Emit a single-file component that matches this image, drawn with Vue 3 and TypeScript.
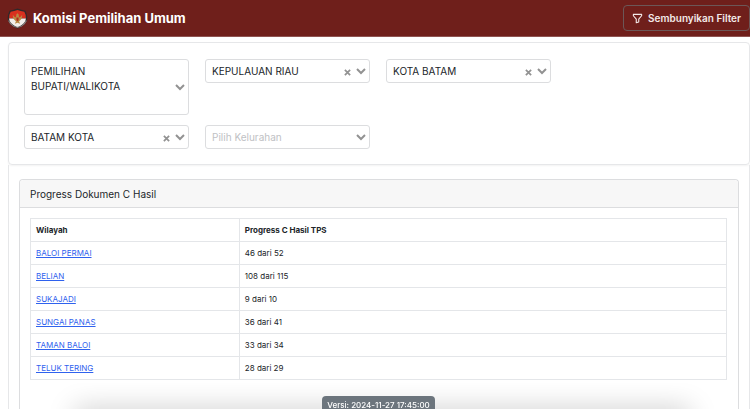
<script setup lang="ts">
import { reactive, ref } from 'vue'

interface Filter {
  id: string
  label: string
  value: string
  options: string[]
  clearable?: boolean
  multiline?: boolean
  startsRow?: boolean
}

interface Row {
  wilayah: string
  selesai: number
  total: number
}

const showFilter = ref(true)

const filters = reactive<Filter[]>([
  { id: 'jenis', label: 'Pilih Pemilihan', value: 'PEMILIHAN BUPATI/WALIKOTA', options: ['PEMILIHAN BUPATI/WALIKOTA'], multiline: true },
  { id: 'provinsi', label: 'Pilih Provinsi', value: 'KEPULAUAN RIAU', options: ['KEPULAUAN RIAU'], clearable: true },
  { id: 'kabupaten', label: 'Pilih Kabupaten/Kota', value: 'KOTA BATAM', options: ['KOTA BATAM'], clearable: true },
  { id: 'kecamatan', label: 'Pilih Kecamatan', value: 'BATAM KOTA', options: ['BATAM KOTA'], clearable: true, startsRow: true },
  {
    id: 'kelurahan',
    label: 'Pilih Kelurahan',
    value: '',
    options: ['BALOI PERMAI', 'BELIAN', 'SUKAJADI', 'SUNGAI PANAS', 'TAMAN BALOI', 'TELUK TERING'],
    clearable: true,
  },
])

const rows: Row[] = [
  { wilayah: 'BALOI PERMAI', selesai: 46, total: 52 },
  { wilayah: 'BELIAN', selesai: 108, total: 115 },
  { wilayah: 'SUKAJADI', selesai: 9, total: 10 },
  { wilayah: 'SUNGAI PANAS', selesai: 36, total: 41 },
  { wilayah: 'TAMAN BALOI', selesai: 33, total: 34 },
  { wilayah: 'TELUK TERING', selesai: 28, total: 29 },
]
</script>

<template>
  <div class="page">
    <header class="navbar">
      <a class="brand" href="#">
        <svg class="logo" viewBox="0 0 40 40" aria-hidden="true">
          <path d="M5 5Q13 4 20 1Q27 4 35 5Q40 14 38 24Q34 35 20 39Q6 35 2 24Q0 14 5 5Z" fill="#30292a" />
          <path d="M7 7Q14 6 20 4Q26 6 33 7Q37 14 36 20H4Q3 14 7 7Z" fill="#d9301f" />
          <path d="M4 20H36Q36 30 20 37Q4 30 4 20Z" fill="#f1eeea" />
          <path d="M11 13Q11 22 17 25L15 30L20 28L25 30L23 25Q29 22 29 13Q26 18 23 18L22 12L20 10L18 12L17 18Q14 18 11 13Z" fill="#b98a45" />
          <path d="M18 18H22V22Q22 24 20 25Q18 24 18 22Z" fill="#b52a1e" />
          <path d="M3 24Q6 31 12 34M37 24Q34 31 28 34M12 35Q20 38 28 35" fill="none" stroke="#8d8583" stroke-width="2" />
        </svg>
        <span>Komisi Pemilihan Umum</span>
      </a>
      <button class="toggle" type="button" @click="showFilter = !showFilter">
        <svg class="funnel" viewBox="0 0 16 16" aria-hidden="true">
          <path d="M2 2H14V4L9.8 8.8V13L6.2 14.2V8.8L2 4Z" fill="none" stroke="currentColor" stroke-width="1.6" stroke-linejoin="round" />
        </svg>
        <span>{{ showFilter ? 'Sembunyikan' : 'Tampilkan' }} Filter</span>
      </button>
    </header>

    <main class="content">
      <form v-if="showFilter" class="filters" @submit.prevent>
        <div v-for="f in filters" :key="f.id" class="field" :class="{ multiline: f.multiline, 'starts-row': f.startsRow }">
          <select :id="f.id" v-model="f.value" :aria-label="f.label" :class="{ empty: !f.value }">
            <option value="" disabled>{{ f.label }}</option>
            <option v-for="o in f.options" :key="o" :value="o">{{ o }}</option>
          </select>
          <label v-if="f.multiline" class="wrapped" :for="f.id">{{ f.value }}</label>
          <span class="marks">
            <button v-if="f.clearable && f.value" class="clear" type="button" aria-label="Hapus" @click="f.value = ''">
              <svg viewBox="0 0 8 8" aria-hidden="true"><path d="M1 1L7 7M7 1L1 7" /></svg>
            </button>
            <svg class="chevron" viewBox="0 0 10 7" aria-hidden="true"><path d="M1 1L5 5L9 1" /></svg>
          </span>
        </div>
      </form>

      <section class="results">
        <div class="card">
          <h2 class="card-title">Progress Dokumen C Hasil</h2>
          <div class="card-body">
            <table>
              <thead>
                <tr>
                  <th scope="col" class="area">Wilayah</th>
                  <th scope="col">Progress C Hasil TPS</th>
                </tr>
              </thead>
              <tbody>
                <tr v-for="r in rows" :key="r.wilayah">
                  <td><a href="#">{{ r.wilayah }}</a></td>
                  <td>{{ r.selesai }} dari {{ r.total }}</td>
                </tr>
              </tbody>
            </table>
          </div>
        </div>
      </section>
    </main>

    <footer class="version">
      <span class="badge">Versi: 2024-11-27 17:45:00</span>
    </footer>
  </div>
</template>

<style>
html,
body {
  background: #fff;
  overflow-x: hidden;
}
body {
  margin: 0;
}
</style>

<style scoped>
.page {
  min-height: 100vh;
  display: flex;
  flex-direction: column;
  color: #212529;
  font-family: Inter, 'Liberation Sans', sans-serif;
  font-size: 10px;
}
.page * {
  box-sizing: border-box;
}
.navbar {
  flex: none;
  height: 37px;
  display: flex;
  align-items: center;
  justify-content: space-between;
  padding-left: 7px;
  background: #6f1f1b;
  border-bottom: 1px solid #8f5452;
}
.brand {
  display: flex;
  align-items: center;
  gap: 5px;
  color: #fff;
  font-size: 13px;
  font-weight: 700;
  line-height: 20px;
  text-decoration: none;
}
.logo {
  width: 21px;
  height: 21px;
}
.toggle {
  display: flex;
  align-items: center;
  gap: 5px;
  height: 26px;
  padding: 0 8px;
  background: transparent;
  border: 1px solid #6c5757;
  border-radius: 4px;
  color: #f3e9e8;
  font: 600 10px/16px Inter, 'Liberation Sans', sans-serif;
}
.funnel {
  width: 11px;
  height: 11px;
}
.content {
  flex: 1;
  display: flex;
  flex-direction: column;
  padding: 5px 0 0 8px;
}
.filters {
  display: grid;
  grid-template-columns: repeat(4, 1fr);
  align-items: start;
  gap: 10px 16px;
  padding: 16px 17px 15px 15px;
  border: 1px solid #e6e7e9;
  border-radius: 4px;
  box-shadow: 0 1px 2px #0000000d;
}
.field {
  display: grid;
  align-items: center;
}
.starts-row {
  grid-column-start: 1;
}
.field > * {
  grid-area: 1 / 1;
}
select {
  appearance: none;
  width: 100%;
  height: 24px;
  margin: 0;
  padding: 0 34px 0 6px;
  background: #fff;
  border: 1px solid #dcdddf;
  border-radius: 3px;
  color: #212529;
  font: 400 10px/15px Inter, 'Liberation Sans', sans-serif;
}
select.empty {
  color: #c0c1c4;
  opacity: 1;
}
.multiline select {
  height: 56px;
  color: transparent;
}
.wrapped {
  align-self: start;
  padding: 5px 34px 0 7px;
  line-height: 15px;
  pointer-events: none;
}
.marks {
  justify-self: end;
  display: flex;
  align-items: center;
  gap: 5px;
  padding-right: 4px;
  pointer-events: none;
}
.marks path {
  fill: none;
  stroke: #929292;
  stroke-width: 2;
}
.clear {
  display: flex;
  padding: 2px 0 0;
  background: none;
  border: 0;
  pointer-events: auto;
}
.clear svg {
  width: 7px;
  height: 7px;
}
.chevron {
  width: 10px;
  height: 7px;
}
.results {
  flex: 1;
  display: flex;
  padding: 14px 10px 0;
  border: solid #e6e7e9;
  border-width: 0 1px;
}
.card {
  flex: 1;
  border: 1px solid #dcdddf;
  border-bottom: 0;
  border-radius: 4px 4px 0 0;
}
.card-title {
  margin: 0;
  padding: 0 10px;
  height: 28px;
  background: #f7f7f7;
  border-bottom: 1px solid #dcdddf;
  border-radius: 4px 4px 0 0;
  font-size: 10px;
  font-weight: 400;
  line-height: 28px;
}
.card-body {
  padding: 10px 11px 26px 10px;
}
table {
  width: 100%;
  table-layout: fixed;
  border-collapse: collapse;
  font-size: 8px;
  line-height: 12px;
}
th,
td {
  height: 23px;
  padding: 0 5px;
  border: 1px solid #e4e6e9;
  text-align: left;
}
th {
  font-weight: 700;
}
.area {
  width: 30%;
}
td a {
  color: #2f62ee;
  text-decoration: underline;
}
.version {
  position: fixed;
  right: 0;
  bottom: 0;
  left: 0;
  display: flex;
  justify-content: center;
  height: 26px;
  padding: 13px 0 0 7px;
  overflow: hidden;
  pointer-events: none;
}
.version::before {
  content: '';
  position: absolute;
  top: 100%;
  right: 8%;
  left: 10%;
  height: 20px;
  box-shadow: 0 0 28px #00000038;
}
.badge {
  position: relative;
  padding: 5px 5px 0;
  background: #6c757d;
  border-radius: 4px 4px 0 0;
  color: #fff;
  font-size: 8px;
  font-weight: 500;
  line-height: 8px;
}
</style>
